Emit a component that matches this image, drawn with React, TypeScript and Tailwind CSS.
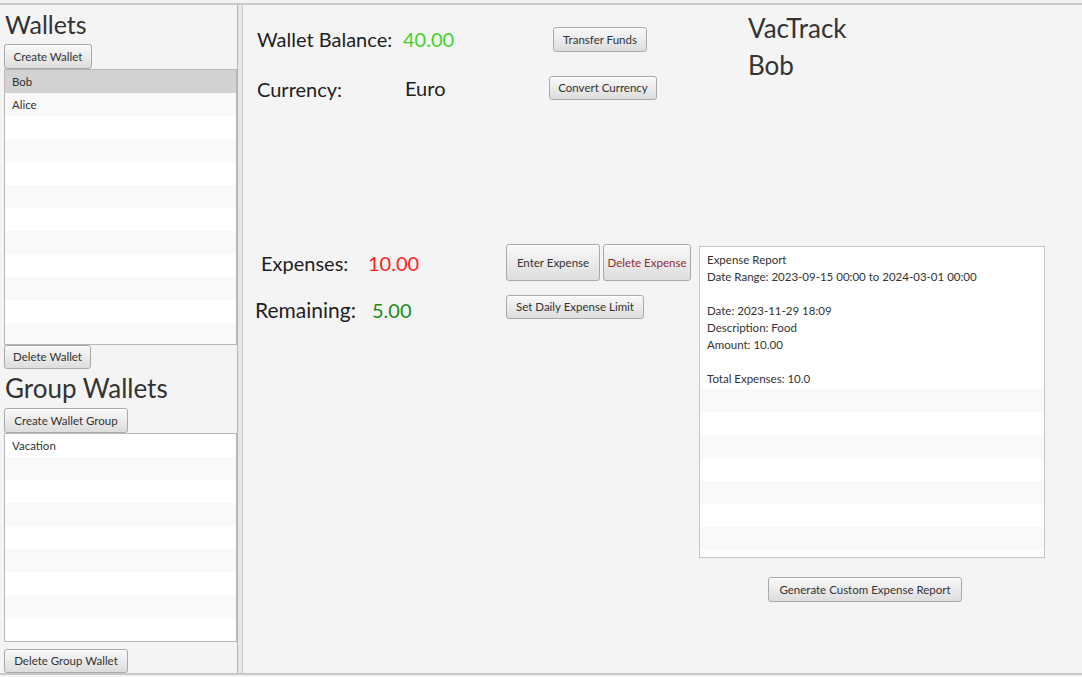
import React from "react";

const Btn = ({ children, className = "", textClass = "text-[#333]" }: { children: React.ReactNode; className?: string; textClass?: string }) => (
  <div
    className={`flex shrink-0 items-center justify-center whitespace-nowrap rounded-[3px] border border-[#a9a9a9] bg-linear-to-b from-[#f9f9f9] to-[#dddddd] text-[11.5px] shadow-[inset_0_1px_0_rgba(255,255,255,0.95)] ${textClass} ${className}`}
  >
    {children}
  </div>
);

const Row = ({ text, i, selected }: { text?: string; i: number; selected?: boolean }) => (
  <div
    className={`flex h-[23px] shrink-0 items-center pl-[7px] text-[11.5px] text-[#333] ${
      selected ? "bg-[#d2d2d2]" : i % 2 === 1 ? "bg-[#f9f9f9]" : "bg-white"
    }`}
  >
    {text}
  </div>
);

export default function App() {
  const walletRows = Array.from({ length: 12 }, (_, i) => i);
  const groupRows = Array.from({ length: 9 }, (_, i) => i);
  const reportRows = Array.from({ length: 8 }, (_, i) => i);
  return (
    <div className="flex h-[677px] w-[1082px] flex-col overflow-hidden bg-[#f4f4f4] font-['Lato',sans-serif]">
      <div className="h-[3px] shrink-0 bg-[#f2f2f2]" />
      <div className="h-[2px] shrink-0 bg-[#c8c8c8]" />
      <div className="flex h-[668px] shrink-0">
        {/* Left pane */}
        <div className="flex w-[237px] shrink-0 flex-col pl-[4px]">
          <div className="ml-[1px] h-[39px] shrink-0 text-[25px] leading-[38px] text-[#333]">Wallets</div>
          <Btn className="h-[25px] w-[88px]">Create Wallet</Btn>
          <div className="flex h-[276px] w-[233px] shrink-0 flex-col overflow-hidden border border-[#b8b8b8] bg-white">
            {walletRows.map((i) => (
              <Row key={i} i={i} selected={i === 0} text={i === 0 ? "Bob" : i === 1 ? "Alice" : undefined} />
            ))}
          </div>
          <Btn className="h-[24px] w-[87px]">Delete Wallet</Btn>
          <div className="ml-[1px] h-[39px] shrink-0 text-[26px] leading-[38px] text-[#333]">Group Wallets</div>
          <Btn className="h-[25px] w-[124px]">Create Wallet Group</Btn>
          <div className="flex h-[209px] w-[233px] shrink-0 flex-col overflow-hidden border border-[#b8b8b8] bg-white">
            {groupRows.map((i) => (
              <Row key={i} i={i} text={i === 0 ? "Vacation" : undefined} />
            ))}
          </div>
          <div className="h-[7px] shrink-0" />
          <Btn className="h-[24px] w-[124px]">Delete Group Wallet</Btn>
        </div>

        {/* Divider */}
        <div className="flex w-[6px] shrink-0">
          <div className="w-[1px] bg-[#b6b6b6]" />
          <div className="w-[4px] bg-[#e6e6e6]" />
          <div className="w-[1px] bg-[#cdcdcd]" />
        </div>

        {/* Right pane */}
        <div className="flex flex-1 flex-col pl-[14px]">
          <div className="flex pt-[5px]">
            <div className="flex w-[491px] shrink-0 flex-col pt-[17px]">
              <div className="flex h-[25px] items-center">
                <span className="w-[146px] shrink-0 -translate-y-[1px] whitespace-nowrap text-[20px] text-[#1e1e1e]">Wallet Balance:</span>
                <span className="w-[150px] shrink-0 -translate-y-[1px] text-[20px] text-[#3ed42e]">40.00</span>
                <Btn className="h-[25px] w-[94px]">Transfer Funds</Btn>
              </div>
              <div className="mt-[23px] flex h-[25px] items-center">
                <span className="w-[148px] shrink-0 translate-y-[1px] text-[20px] text-[#1e1e1e]">Currency:</span>
                <span className="w-[144px] shrink-0 text-[20px] text-[#1e1e1e]">Euro</span>
                <Btn className="h-[24px] w-[108px]">Convert Currency</Btn>
              </div>
            </div>
            <div className="flex flex-col text-[26px] leading-[37px] text-[#333]">
              <span>VacTrack</span>
              <span>Bob</span>
            </div>
          </div>

          <div className="mt-[144px] flex">
            <div className="flex w-[249px] shrink-0 flex-col">
              <div className="flex h-[37px] items-center pl-[4px]">
                <span className="w-[107px] shrink-0 text-[20px] text-[#1e1e1e]">Expenses:</span>
                <span className="text-[20px] text-[#ff1f1f]">10.00</span>
              </div>
              <div className="ml-[-2px] mt-[17px] flex h-[24px] items-center">
                <span className="w-[117px] shrink-0 text-[21px] text-[#1e1e1e]">Remaining:</span>
                <span className="text-[20px] text-[#1a8c1a]">5.00</span>
              </div>
            </div>
            <div className="flex w-[193px] shrink-0 flex-col">
              <div className="flex gap-[3px]">
                <Btn className="h-[37px] w-[94px]">Enter Expense</Btn>
                <Btn className="h-[37px] w-[88px]" textClass="text-[#922a35]">
                  Delete Expense
                </Btn>
              </div>
              <Btn className="mt-[14px] h-[24px] w-[138px]">Set Daily Expense Limit</Btn>
            </div>
            <div className="flex flex-col pt-[2px]">
              <div className="flex h-[312px] w-[346px] flex-col overflow-hidden border border-[#c4c4c4] bg-white">
                <div className="h-[142px] shrink-0 bg-white pl-[7px] pt-[4px] text-[11.5px] leading-[17px] text-[#333]">
                  <div>Expense Report</div>
                  <div>Date Range: 2023-09-15 00:00 to 2024-03-01 00:00</div>
                  <div>&nbsp;</div>
                  <div>Date: 2023-11-29 18:09</div>
                  <div>Description: Food</div>
                  <div>Amount: 10.00</div>
                  <div>&nbsp;</div>
                  <div>Total Expenses: 10.0</div>
                </div>
                {reportRows.map((i) => (
                  <Row key={i} i={i + 1} />
                ))}
              </div>
              <Btn className="ml-[69px] mt-[19px] h-[25px] w-[194px]">Generate Custom Expense Report</Btn>
            </div>
          </div>
        </div>
      </div>
      <div className="h-[2px] shrink-0 bg-[#c8c8c8]" />
      <div className="flex-1 bg-[#f2f2f2]" />
    </div>
  );
}
